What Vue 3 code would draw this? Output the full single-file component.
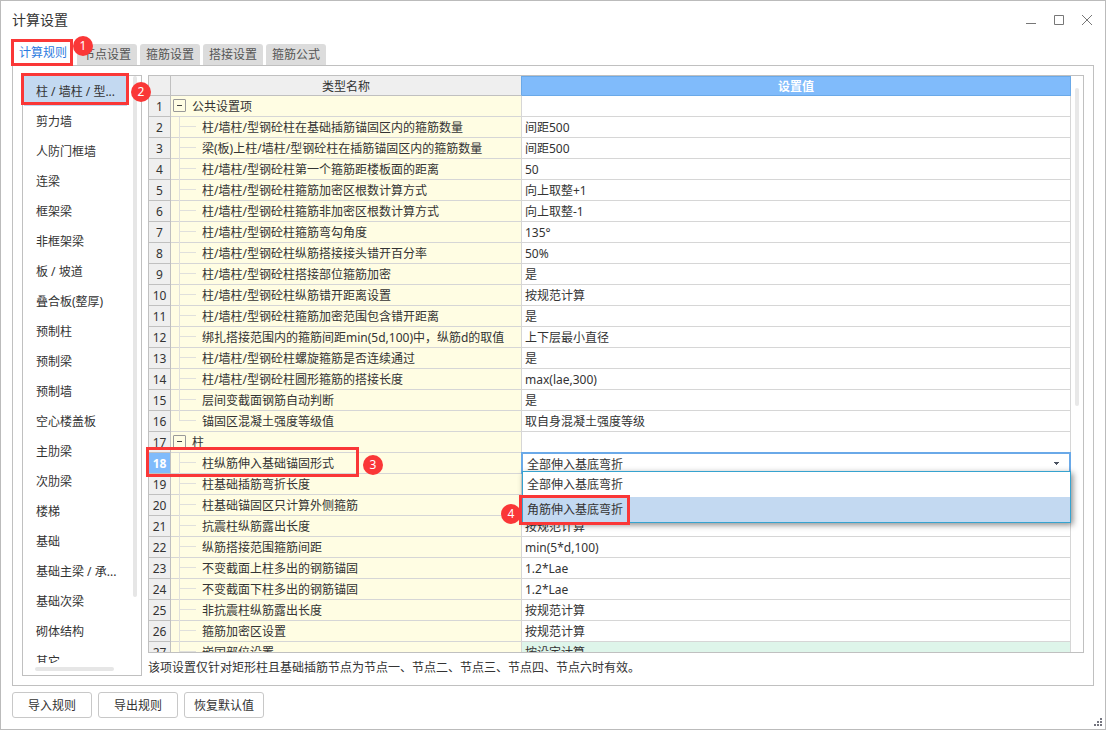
<script setup>
import { ref } from 'vue'

const tabs = ['计算规则', '节点设置', '箍筋设置', '搭接设置', '箍筋公式']
const activeTab = ref(0)

const categories = [
  '柱 / 墙柱 / 型...', '剪力墙', '人防门框墙', '连梁', '框架梁', '非框架梁', '板 / 坡道',
  '叠合板(整厚)', '预制柱', '预制梁', '预制墙', '空心楼盖板', '主肋梁', '次肋梁', '楼梯',
  '基础', '基础主梁 / 承...', '基础次梁', '砌体结构', '其它',
]
const activeCategory = ref(0)

const options = ['全部伸入基底弯折', '角筋伸入基底弯折']
const anchorForm = ref(options[0])

const rows = [
  { name: '公共设置项', group: true },
  { name: '柱/墙柱/型钢砼柱在基础插筋锚固区内的箍筋数量', value: '间距500' },
  { name: '梁(板)上柱/墙柱/型钢砼柱在插筋锚固区内的箍筋数量', value: '间距500' },
  { name: '柱/墙柱/型钢砼柱第一个箍筋距楼板面的距离', value: '50' },
  { name: '柱/墙柱/型钢砼柱箍筋加密区根数计算方式', value: '向上取整+1' },
  { name: '柱/墙柱/型钢砼柱箍筋非加密区根数计算方式', value: '向上取整-1' },
  { name: '柱/墙柱/型钢砼柱箍筋弯勾角度', value: '135°' },
  { name: '柱/墙柱/型钢砼柱纵筋搭接接头错开百分率', value: '50%' },
  { name: '柱/墙柱/型钢砼柱搭接部位箍筋加密', value: '是' },
  { name: '柱/墙柱/型钢砼柱纵筋错开距离设置', value: '按规范计算' },
  { name: '柱/墙柱/型钢砼柱箍筋加密范围包含错开距离', value: '是' },
  { name: '绑扎搭接范围内的箍筋间距min(5d,100)中，纵筋d的取值', value: '上下层最小直径' },
  { name: '柱/墙柱/型钢砼柱螺旋箍筋是否连续通过', value: '是' },
  { name: '柱/墙柱/型钢砼柱圆形箍筋的搭接长度', value: 'max(lae,300)' },
  { name: '层间变截面钢筋自动判断', value: '是' },
  { name: '锚固区混凝土强度等级值', value: '取自身混凝土强度等级', last: true },
  { name: '柱', group: true },
  { name: '柱纵筋伸入基础锚固形式', select: true },
  { name: '柱基础插筋弯折长度', value: '' },
  { name: '柱基础锚固区只计算外侧箍筋', value: '' },
  { name: '抗震柱纵筋露出长度', value: '按规范计算' },
  { name: '纵筋搭接范围箍筋间距', value: 'min(5*d,100)' },
  { name: '不变截面上柱多出的钢筋锚固', value: '1.2*Lae' },
  { name: '不变截面下柱多出的钢筋锚固', value: '1.2*Lae' },
  { name: '非抗震柱纵筋露出长度', value: '按规范计算' },
  { name: '箍筋加密区设置', value: '按规范计算' },
  { name: '嵌固部位设置', value: '按设定计算', tinted: true },
]
</script>

<template>
  <div class="window">
    <header class="titlebar">
      <h1>计算设置</h1>
      <div class="controls">
        <button aria-label="最小化"><svg width="12" height="12"><path d="M1 9.5h10" /></svg></button>
        <button aria-label="最大化"><svg width="12" height="12"><path d="M1.5 1.5h9v9h-9z" /></svg></button>
        <button aria-label="关闭"><svg width="12" height="12"><path d="M1 1l10 10M11 1L1 11" /></svg></button>
      </div>
    </header>

    <nav class="tabs" role="tablist">
      <button
        v-for="(tab, i) in tabs"
        :key="tab"
        role="tab"
        :aria-selected="i === activeTab"
        :class="['tab', { active: i === activeTab }]"
        @click="activeTab = i"
      >{{ tab }}</button>
    </nav>

    <main class="panel">
      <aside class="sidebar">
        <div class="category-list">
          <button
            v-for="(c, i) in categories"
            :key="c"
            :class="['category', { active: i === activeCategory }]"
            @click="activeCategory = i"
          >{{ c }}</button>
        </div>
        <span class="track-v"></span>
        <span class="track-h"></span>
      </aside>

      <section class="content">
        <div class="grid">
          <table>
            <colgroup>
              <col class="col-index" />
              <col class="col-name" />
              <col />
            </colgroup>
            <thead>
              <tr>
                <th class="index"></th>
                <th class="head-name">类型名称</th>
                <th class="head-value">设置值</th>
              </tr>
            </thead>
            <tbody>
              <tr v-for="(row, i) in rows" :key="i">
                <td :class="['index', { current: row.select }]">{{ i + 1 }}</td>
                <td :class="['name', row.group ? 'group' : 'leaf', { last: row.last }]">
                  <button v-if="row.group" class="toggle" aria-label="折叠"></button>{{ row.name }}
                </td>
                <td :class="['value', { tinted: row.tinted, editing: row.select }]">
                  <template v-if="row.select">
                    <select v-model="anchorForm" :aria-label="row.name">
                      <option v-for="o in options" :key="o">{{ o }}</option>
                    </select>
                    <svg class="caret" width="5" height="3"><path d="M0 0h5v1H4v1H3v1H2V2H1V1H0z" /></svg>
                    <div class="menu" role="listbox">
                      <button
                        v-for="(o, n) in options"
                        :key="o"
                        role="option"
                        :class="{ hovered: n === 1 }"
                        @click="anchorForm = o"
                      >{{ o }}</button>
                    </div>
                  </template>
                  <template v-else>{{ row.value }}</template>
                </td>
              </tr>
            </tbody>
          </table>
          <div class="gutter"><span></span></div>
        </div>
        <p class="hint">该项设置仅针对矩形柱且基础插筋节点为节点一、节点二、节点三、节点四、节点六时有效。</p>
      </section>
    </main>

    <footer class="actions">
      <button>导入规则</button>
      <button>导出规则</button>
      <button>恢复默认值</button>
    </footer>

    <svg class="grip" width="8" height="8">
      <path d="M6 0h2v2H6zM3 3h2v2H3zM6 3h2v2H6zM0 6h2v2H0zM3 6h2v2H3zM6 6h2v2H6z" />
    </svg>

    <span class="mark mark-1"></span>
    <span class="mark mark-2"></span>
    <span class="mark mark-3"></span>
    <span class="mark mark-4"></span>
    <span class="step step-1">1</span>
    <span class="step step-2">2</span>
    <span class="step step-3">3</span>
    <span class="step step-4">4</span>
  </div>
</template>

<style>
body {
  margin: 0;
  background: #fff;
}
</style>

<style scoped>
.window,
.window * {
  box-sizing: border-box;
}
.window {
  position: relative;
  display: flex;
  flex-direction: column;
  height: 100vh;
  padding: 0 11px 11px;
  border: 1px solid #bbb;
  background: #fff;
  color: #333;
  font: 12px/20px "Noto Sans", "Noto Sans CJK SC", sans-serif;
}
button,
select {
  margin: 0;
  padding: 0;
  border: 0;
  background: none;
  color: inherit;
  font: inherit;
}
.titlebar {
  display: flex;
  justify-content: space-between;
  align-items: center;
  height: 38px;
  flex: none;
}
h1 {
  margin: 0;
  font-size: 14px;
  font-weight: 400;
}
.controls {
  display: flex;
  gap: 16px;
  padding-right: 1px;
}
.controls button {
  display: flex;
}
.controls path {
  fill: none;
  stroke: #777;
}
.tabs {
  display: flex;
  align-items: flex-end;
  gap: 3px;
  height: 26px;
  flex: none;
}
.tab {
  width: 60px;
  height: 21px;
  padding-top: 1px;
  border-radius: 3px 3px 0 0;
  background: #dcdcdc;
  color: #555;
}
.tab.active {
  width: 62px;
  height: 26px;
  padding-top: 2px;
  background: #fff;
  color: #2c7be0;
}
.panel {
  display: flex;
  flex: 1;
  gap: 6px;
  min-height: 0;
  padding: 9px;
  border: 1px solid #c0c0c0;
}
.sidebar {
  position: relative;
  width: 120px;
  flex: none;
  padding: 0 14px 12px 1px;
  border: 1px solid #c0c0c0;
}
.category-list {
  display: flex;
  flex-direction: column;
  height: 100%;
  overflow: hidden;
}
.category {
  width: 100%;
  height: 30px;
  flex: none;
  padding: 2px 0 0 12px;
  text-align: left;
  white-space: nowrap;
}
.category.active {
  background: #c3d9f1;
}
.track-v,
.track-h {
  position: absolute;
  border-radius: 2px;
  background: #e6e6e6;
}
.track-v {
  top: 0;
  right: 4px;
  width: 4px;
  height: 87%;
}
.track-h {
  left: 12px;
  bottom: 4px;
  width: 79px;
  height: 4px;
}
.content {
  display: flex;
  flex: 1;
  flex-direction: column;
  min-width: 0;
}
.grid {
  display: flex;
  flex: 1;
  min-height: 0;
  overflow: hidden;
  border: 1px solid #c0c0c0;
}
table {
  flex: 1;
  align-self: flex-start;
  table-layout: fixed;
  border-collapse: separate;
  border-spacing: 0;
}
.col-index {
  width: 22px;
}
.col-name {
  width: 351px;
}
th,
td {
  height: 21px;
  padding: 2px 0 0;
  border-right: 1px solid #d6d6d6;
  border-bottom: 1px solid #d6d6d6;
  line-height: 18px;
  text-align: left;
  white-space: nowrap;
}
th {
  height: 20px;
  border-color: #c0c0c0;
  background: #efefef;
  font-weight: 400;
  line-height: 16px;
  text-align: center;
}
.head-name {
  border-right-color: #6aa9e8;
}
.head-value {
  border: 1px solid #6aa9e8;
  border-left: 0;
  background: #80bbfb;
  color: #fff;
  font-weight: 700;
}
.index {
  border-color: #c0c0c0;
  background: #efefef;
  text-align: center;
}
.index.current {
  background: #80bbfb;
  color: #fff;
  font-weight: 700;
}
.name {
  position: relative;
  background: #fffde3;
}
.group {
  padding-left: 21px;
}
.leaf {
  padding-left: 31px;
}
.leaf::before,
.leaf::after {
  content: "";
  position: absolute;
  left: 8px;
  background: #e0e0dc;
}
.leaf::before {
  top: 0;
  width: 1px;
  height: 21px;
}
.leaf.last::before {
  height: 10px;
}
.leaf::after {
  top: 9px;
  width: 17px;
  height: 1px;
}
.toggle {
  position: absolute;
  top: 3px;
  left: 2px;
  width: 13px;
  height: 13px;
  border: 1px solid #999;
  border-radius: 1px;
}
.toggle::after {
  content: "";
  position: absolute;
  top: 5px;
  left: 3px;
  width: 5px;
  height: 1px;
  background: #444;
}
.value {
  padding-left: 3px;
}
.tinted {
  background: #def5ea;
}
.editing {
  position: relative;
}
select {
  position: absolute;
  top: -1px;
  right: -1px;
  left: -1px;
  width: calc(100% + 2px);
  height: 22px;
  padding: 2px 4px 0;
  border: 2px solid #6aa9e8;
  border-radius: 0;
  background: #fff;
  appearance: none;
  outline: 0;
}
.caret {
  position: absolute;
  top: 9px;
  right: 11px;
  fill: #4a5260;
}
.menu {
  position: absolute;
  z-index: 2;
  top: 18px;
  right: -1px;
  left: 0;
  border: 1px solid #36a3cf;
  background: #fff;
  box-shadow: 2px 2px 6px rgba(0, 0, 0, 0.45);
}
.menu button {
  display: block;
  width: 100%;
  height: 25px;
  padding: 1px 0 0 4px;
  text-align: left;
}
.menu .hovered {
  background: #c3d9f1;
}
.gutter {
  width: 12px;
  flex: none;
  padding: 12px 4px 0;
}
.gutter span {
  display: block;
  width: 4px;
  height: 318px;
  border-radius: 2px;
  background: #e8e8e8;
}
.hint {
  margin: 5px 0 -2px;
  white-space: nowrap;
}
.actions {
  display: flex;
  flex: none;
  gap: 6px;
  padding-top: 6px;
}
.actions button {
  width: 80px;
  height: 26px;
  padding-top: 2px;
  border: 1px solid #c8c8c8;
  border-radius: 3px;
}
.grip {
  position: absolute;
  right: 3px;
  bottom: 3px;
  fill: #74757f;
}
.mark {
  position: absolute;
  z-index: 3;
  border: 3px solid #fa3737;
  pointer-events: none;
}
.mark-1 {
  top: 38px;
  left: 10px;
  width: 62px;
  height: 27px;
}
.mark-2 {
  top: 72px;
  left: 20px;
  width: 108px;
  height: 32px;
}
.mark-3 {
  top: 446px;
  left: 145px;
  width: 213px;
  height: 30px;
}
.mark-4 {
  top: 494px;
  left: 518px;
  width: 111px;
  height: 30px;
}
.step {
  position: absolute;
  z-index: 2;
  width: 20px;
  height: 20px;
  border-radius: 50%;
  background: #fa3737;
  color: #fff;
  text-align: center;
}
.step-1 {
  top: 35px;
  left: 72px;
}
.step-2 {
  top: 81px;
  left: 130px;
}
.step-3 {
  top: 454px;
  left: 362px;
}
.step-4 {
  top: 503px;
  left: 500px;
}
</style>
